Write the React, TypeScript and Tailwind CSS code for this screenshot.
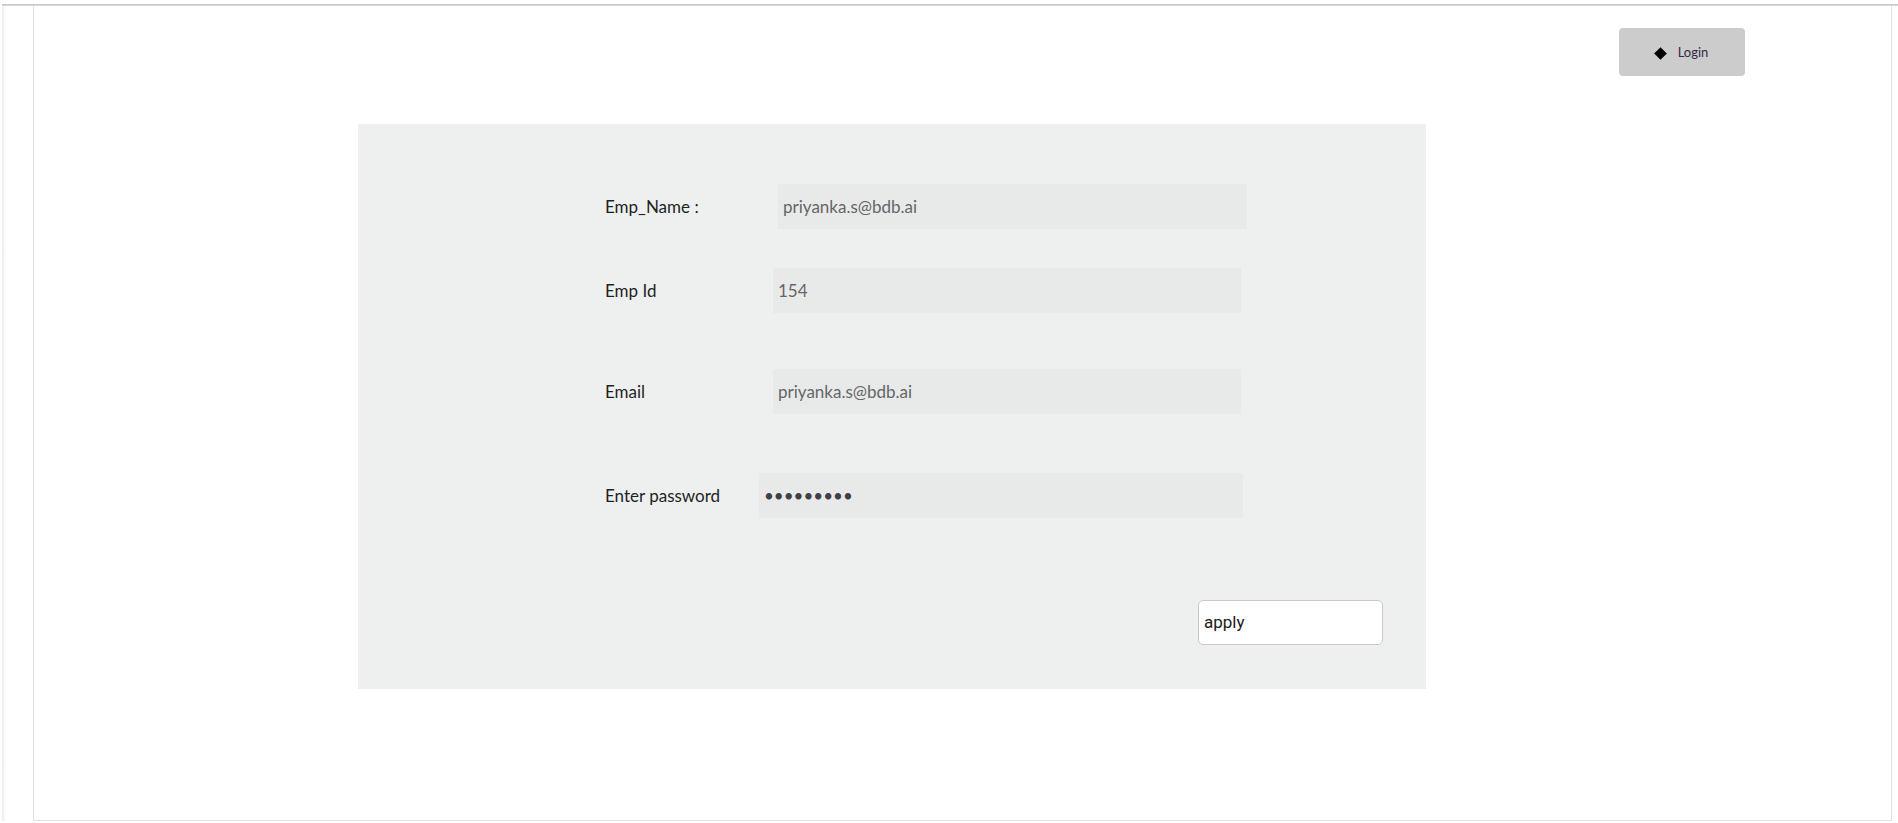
import React from "react";

const rows = [
  { label: "Emp_Name :", value: "priyanka.s@bdb.ai", labelW: "w-[173px]", inputW: "w-[469px]", mt: "mt-[60px]", type: "text" },
  { label: "Emp Id", value: "154", labelW: "w-[168px]", inputW: "w-[468px]", mt: "mt-[39px]", type: "text" },
  { label: "Email", value: "priyanka.s@bdb.ai", labelW: "w-[168px]", inputW: "w-[468px]", mt: "mt-[56px]", type: "text" },
  { label: "Enter password", value: "123456789", labelW: "w-[154px]", inputW: "w-[484px]", mt: "mt-[59px]", type: "password" },
];

export default function App() {
  return (
    <div className="h-[823px] w-full bg-white pt-[4px] font-['Lato',sans-serif] overflow-hidden">
      {/* top rule */}
      <div className="ml-[2px] h-[2px] bg-gradient-to-b from-[#c4c4c4] to-[#dcdcdc]" />

      <div className="flex h-[815px]">
        <div className="ml-[2px] w-[4px] bg-gradient-to-r from-[#ececec] to-white" />
        <div className="w-[27px]" />

        {/* main frame */}
        <div className="w-[1859px] border-x border-b border-[#e2e2e2] bg-white">
          {/* header */}
          <div className="flex justify-end pr-[146px] pt-[22px]">
            <button className="flex h-[48px] w-[126px] items-center justify-center gap-[13px] rounded-[4px] bg-[#cccccc] pt-[2px]">
              <span className="h-[9px] w-[9px] rotate-45 bg-black" />
              <span className="text-[13px] text-[#35283f]">Login</span>
            </button>
          </div>

          {/* form panel */}
          <div className="ml-[324px] mt-[48px] flex h-[565px] w-[1068px] flex-col bg-[#eef0ef] pl-[247px]">
            {rows.map((row) => (
              <div key={row.label} className={`flex items-center ${row.mt}`}>
                <label className={`${row.labelW} text-[17px] text-[#1f1f1f]`}>{row.label}</label>
                <input
                  readOnly
                  type={row.type}
                  value={row.value}
                  className={`${row.inputW} h-[45px] bg-[#e8eaea] px-[5px] text-[17px] outline-none ${
                    row.type === "password" ? "text-[15px] text-[#404045]" : "text-[#666666]"
                  }`}
                />
              </div>
            ))}

            <div className="mt-[82px] flex justify-end pr-[43px]">
              <button className="h-[45px] w-[185px] rounded-[5px] border border-[#c9c9c9] bg-white px-[5px] text-left font-['Roboto',sans-serif] text-[17px] text-[#1a1a1a]">
                apply
              </button>
            </div>
          </div>
        </div>
      </div>
    </div>
  );
}
